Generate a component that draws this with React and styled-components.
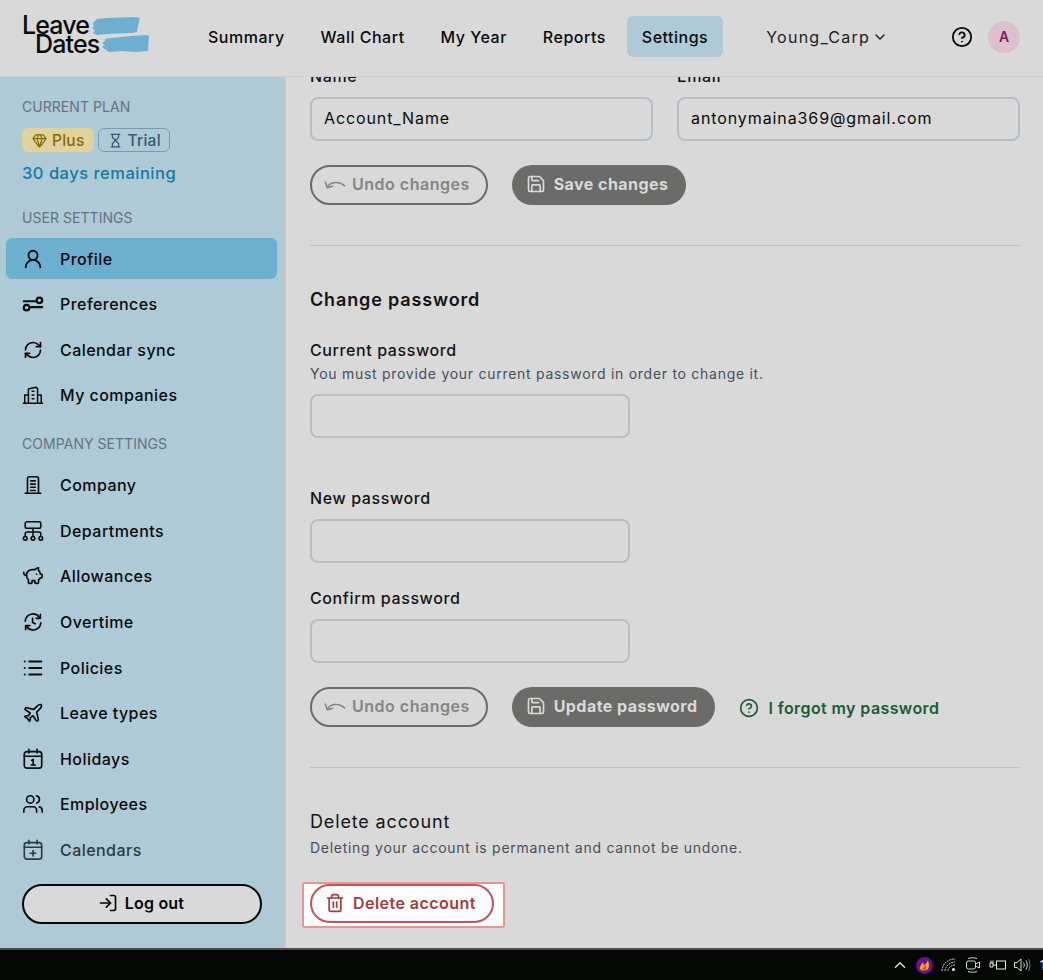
import * as React from 'react'
import styled, { createGlobalStyle } from 'styled-components'
import {
  UserRound,
  RefreshCw,
  PiggyBank,
  List,
  Plane,
  Users,
  LogIn,
  Save,
  CircleHelp,
  Trash2,
  Gem,
  Hourglass,
  ChevronDown,
  ChevronUp,
} from 'lucide-react'

const GlobalStyle = createGlobalStyle`
  html, body {
    margin: 0;
    padding: 0;
    background: #d9d9d9;
  }
  * {
    box-sizing: border-box;
  }
  body {
    font-family: Inter, 'Noto Sans', 'Liberation Sans', sans-serif;
    color: #0a0a0a;
  }
`

const Page = styled.div`
  display: flex;
  flex-direction: column;
  width: 1043px;
  height: 980px;
  overflow: hidden;
`

const Header = styled.header`
  display: flex;
  align-items: center;
  flex: 0 0 77px;
  padding: 0 23px 3px 22px;
  border-bottom: 1px solid #c9ced2;
`

const Logo = styled.div`
  position: relative;
  width: 130px;
  height: 42px;
  margin-right: 56px;
  font-size: 25px;
  font-weight: 500;
  line-height: 19px;
  letter-spacing: -0.85px;
  color: #0b0b0b;

  div + div {
    padding-left: 13px;
  }

  svg {
    position: absolute;
    left: 1px;
    top: 0;
  }

  span {
    position: relative;
  }
`

const Nav = styled.nav`
  display: flex;
  align-items: center;
  gap: 36px;
`

const NavItem = styled.a`
  font-size: 16px;
  font-weight: 500;
  letter-spacing: 0.5px;
  color: #0a0a0a;
`

const NavActive = styled(NavItem)`
  display: flex;
  align-items: center;
  height: 41px;
  margin-left: -15px;
  padding: 0 15px;
  border-radius: 6px;
  background: #aecad6;
`

const Workspace = styled.div`
  display: flex;
  align-items: center;
  gap: 2px;
  margin-left: 43px;
  font-size: 16px;
  letter-spacing: 1.25px;
  color: #1c1c1c;
`

const HeaderEnd = styled.div`
  display: flex;
  align-items: center;
  gap: 15px;
  margin-left: auto;
`

const Avatar = styled.div`
  display: flex;
  align-items: center;
  justify-content: center;
  width: 32px;
  height: 32px;
  border-radius: 50%;
  background: #dcc0d0;
  color: #7a1d5c;
  font-size: 14px;
  font-weight: 600;
`

const Body = styled.div`
  display: flex;
  flex: 1;
  min-height: 0;
`

const Sidebar = styled.aside`
  display: flex;
  flex-direction: column;
  flex: 0 0 286px;
  padding: 20px 7px 0 6px;
  background: #aecad6;
  border-right: 2px solid #c8c8c8;
`

const SectionTitle = styled.div`
  height: 20px;
  margin: ${(props) => props.$margin || '0'};
  padding-left: 16px;
  font-size: 14px;
  line-height: 20px;
  letter-spacing: 0.05px;
  color: #66727f;
`

const Badges = styled.div`
  display: flex;
  gap: 4px;
  margin: 11px 0 0 16px;
`

const Badge = styled.div`
  display: flex;
  align-items: center;
  gap: 5px;
  height: 24px;
  padding: 0 8px 0 9px;
  border-radius: 6px;
  border: 1px solid ${(props) => props.$border};
  background: ${(props) => props.$bg};
  color: ${(props) => props.$color};
  font-size: 15.5px;
  font-weight: 500;
  letter-spacing: 0.25px;
`

const Remaining = styled.div`
  margin: 9px 0 23px 16px;
  font-size: 16.5px;
  line-height: 24px;
  font-weight: 500;
  letter-spacing: 0.5px;
  color: #0f7ba6;
`

const NavList = styled.div`
  display: flex;
  flex-direction: column;
  gap: 4.6px;
  margin: ${(props) => props.$margin || '0'};
`

const SideItem = styled.a`
  display: flex;
  align-items: center;
  gap: 16px;
  height: 41px;
  padding-left: 16px;
  border-radius: 6px;
  background: ${(props) => (props.$active ? '#6dafcf' : 'transparent')};
  color: ${(props) => (props.$faded ? '#2c3a42' : '#0a0a0a')};
  font-size: 16px;
  font-weight: 500;
  letter-spacing: 0.45px;
`

const IconSlot = styled.span`
  display: flex;
  align-items: center;
  justify-content: center;
  flex: 0 0 22px;
  height: 22px;
`

const LogoutButton = styled.button`
  display: flex;
  align-items: center;
  justify-content: center;
  gap: 7px;
  width: 240px;
  height: 40px;
  margin: 13px 0 0 16px;
  padding: 0 2px 2px 0;
  border: 2px solid #050505;
  border-radius: 20px;
  background: #d9d9d9;
  color: #050505;
  font-family: inherit;
  font-size: 16px;
  font-weight: 600;
  letter-spacing: 0.2px;
`

const Main = styled.main`
  flex: 1;
  min-width: 0;
  overflow: hidden;
  padding: 0 23px 0 24px;
`

const Content = styled.div`
  margin-top: -13px;
`

const TwoColumns = styled.div`
  display: grid;
  grid-template-columns: 343px 343px;
  gap: 24px;
`

const Label = styled.label`
  display: block;
  height: 24px;
  margin: ${(props) => props.$margin || '0 0 9px'};
  font-size: 16px;
  line-height: 24px;
  font-weight: 500;
  letter-spacing: 0.6px;
  color: #141414;
`

const Hint = styled.p`
  margin: ${(props) => props.$margin || '0'};
  font-size: 14px;
  line-height: 20px;
  letter-spacing: 0.72px;
  color: #46505c;
`

const Input = styled.div`
  display: flex;
  align-items: center;
  width: ${(props) => props.$width || '100%'};
  height: 44px;
  padding: 0 12px 2px;
  border: 2px solid #b5bdc6;
  border-radius: 8px;
  font-size: 16px;
  letter-spacing: 0.9px;
  color: #0a0a0a;
`

const Actions = styled.div`
  display: flex;
  align-items: center;
  gap: 24px;
  margin-top: 24px;
`

const GhostButton = styled.button`
  display: flex;
  align-items: center;
  gap: 6px;
  height: 40px;
  padding: 0 16px 2px 12px;
  border: 2px solid #6b6b69;
  border-radius: 20px;
  background: transparent;
  color: #858585;
  font-family: inherit;
  font-size: 16px;
  font-weight: 600;
  letter-spacing: 0.5px;
`

const SolidButton = styled.button`
  display: flex;
  align-items: center;
  gap: 8px;
  height: 40px;
  padding: 0 18px 2px 14px;
  border: 0;
  border-radius: 20px;
  background: #6b6b69;
  color: #d9d9d9;
  font-family: inherit;
  font-size: 16px;
  font-weight: 700;
  letter-spacing: 0.45px;
`

const ForgotLink = styled.a`
  display: flex;
  align-items: center;
  gap: 9px;
  margin: 2px 0 0;
  color: #1a5c36;
  font-size: 16px;
  font-weight: 600;
  letter-spacing: 0.4px;
`

const Divider = styled.hr`
  height: 1px;
  margin: ${(props) => props.$margin};
  border: 0;
  background: #c2c2c2;
`

const SectionHeading = styled.h2`
  margin: ${(props) => props.$margin || '0'};
  font-size: 18px;
  line-height: 28px;
  font-weight: ${(props) => props.$weight || 600};
  letter-spacing: 0.85px;
  color: #141414;
`

const DeleteFrame = styled.div`
  display: inline-flex;
  margin: 24px 0 0 -8px;
  padding: 2px 11px 5px 8px;
  outline: 2px solid #ec9393;
  outline-offset: -2px;
  border-radius: 2px;
  background: #fff;
`

const DeleteButton = styled.button`
  display: flex;
  align-items: center;
  gap: 8px;
  height: 39px;
  padding: 0 16px 1px 13px;
  border: 2px solid #c85254;
  border-radius: 20px;
  background: #fff;
  color: #a63a3d;
  font-family: inherit;
  font-size: 16px;
  font-weight: 600;
  letter-spacing: 0.45px;
`

const Taskbar = styled.footer`
  display: flex;
  align-items: center;
  justify-content: flex-end;
  flex: 0 0 32px;
  border-top: 2px solid #4d4d4d;
  background: #030603;
  color: #e4e4e4;
  font-size: 13px;
  overflow: hidden;
`

const TraySlot = styled.span`
  display: flex;
  align-items: center;
  justify-content: center;
  width: 24.5px;
`

const Clock = styled.span`
  margin: 0 -2px 0 5px;
`

const iconProps = {
  width: 22,
  height: 22,
  viewBox: '0 0 24 24',
  fill: 'none',
  stroke: 'currentColor',
  strokeWidth: 2,
  strokeLinecap: 'round',
  strokeLinejoin: 'round',
}

const SlidersIcon = () => (
  <svg {...iconProps} strokeWidth={2.4}>
    <circle cx="19" cy="8" r="3" />
    <circle cx="5" cy="16" r="3" />
    <path d="M2 9h13M9 15.500h13" />
  </svg>
)

const BuildingsIcon = () => (
  <svg {...iconProps} strokeWidth={1.6}>
    <path d="M7 21V5.500L15 3.500 17 5v16" />
    <path d="M7 12H3v9M17 12h4v9M1.500 21h21" />
    <path d="M11 8h2M11 12h2M11 16h2" />
  </svg>
)

const CompanyIcon = () => (
  <svg {...iconProps} strokeWidth={1.8}>
    <path d="M6 21V5a2 2 0 0 1 2-2h8a2 2 0 0 1 2 2v16" />
    <path d="M3.500 21h17M9.500 7.500h5M9.500 11h5M9.500 14.500h5M9.500 18h5" />
  </svg>
)

const TreeIcon = () => (
  <svg {...iconProps} strokeWidth={1.7}>
    <rect x="3.500" y="2" width="17" height="7" rx="2" />
    <path d="M12 9v9M3.500 18v-3a2 2 0 0 1 2-2h13a2 2 0 0 1 2 2v3" />
    <circle cx="3.500" cy="20" r="2" />
    <circle cx="12" cy="20" r="2" />
    <circle cx="20.500" cy="20" r="2" />
  </svg>
)

const OvertimeIcon = () => (
  <svg {...iconProps} strokeWidth={1.8}>
    <path d="M3.500 11a8.500 8.500 0 0 1 15.500-4" />
    <path d="M20 3.500V8h-4.500" />
    <path d="M20.500 13a8.500 8.500 0 0 1-15.500 4" />
    <path d="M4 20.500V16h4.500" />
    <path d="M11.500 8v4.500l3 1.500" />
  </svg>
)

const HolidayIcon = () => (
  <svg {...iconProps} strokeWidth={1.8}>
    <rect x="2.500" y="4" width="19" height="18" rx="3" />
    <path d="M7.500 1.500v4M16.500 1.500v4M2.500 9h19" />
    <path d="M10.500 13.500l1.700-1v6M10 18.500h4.500" />
  </svg>
)

const CalendarAddIcon = () => (
  <svg {...iconProps} strokeWidth={1.8}>
    <rect x="2.500" y="4" width="19" height="18" rx="3" />
    <path d="M7.500 1.500v4M16.500 1.500v4M2.500 9h19" />
    <path d="M12 12.500v6M9 15.500h6" />
  </svg>
)

const UndoIcon = () => (
  <svg {...iconProps} strokeWidth={1.7}>
    <path d="M1.500 10l2 6 6-1.500" />
    <path d="M3.500 15.500C7 10 16 8 22.500 14" />
  </svg>
)

const LogoMark = () => (
  <svg width="130" height="42" viewBox="0 0 130 42" fill="#6dafcf">
    <path d="M70 7l4-4 10-1 26-1 7 1-2 8-1 6-5 1-26 1-9 1-4-2 2-3-3-2 2-2z" />
    <path d="M82 23l6-1 20-2 16-1 2 1-1 15-12 1-14-1-13 1-3-2-4-3 3-2-3-2 3-2z" />
  </svg>
)

const WifiIcon = () => (
  <svg width="16" height="16" viewBox="0 0 16 16" fill="none" stroke="#c9c9c9" strokeWidth="1">
    <path d="M1 14C1 8 6 2 14 2M4 14c0-4 4-9 10-9M7 14c0-3 3-6 7-6" strokeDasharray="2 0.7" />
    <circle cx="12.500" cy="12.500" r="1.500" fill="#fff" stroke="none" />
  </svg>
)

const CameraIcon = () => (
  <svg width="18" height="18" viewBox="0 0 18 18" fill="none" stroke="#d8d8d8" strokeWidth="1">
    <rect x="2.500" y="5" width="9" height="8" rx="2" />
    <path d="M11.500 8l4-2v6l-4-2M4 2.500c3-1 6-1 9 0M4 15.500c3 1 6 1 9 0" />
  </svg>
)

const PlugIcon = () => (
  <svg width="18" height="16" viewBox="0 0 18 16" fill="none" stroke="#ededed" strokeWidth="1">
    <rect x="7.500" y="4" width="9" height="8" />
    <path d="M1 6h3v4H1zM4 8h3.500M2 6V3.500M4 6V3.500" />
  </svg>
)

const SpeakerIcon = () => (
  <svg width="18" height="16" viewBox="0 0 18 16" fill="none" stroke="#dcdcdc" strokeWidth="1">
    <path d="M1.500 5.500h2.500L8 2v12l-4-3.500H1.500z" />
    <path d="M10.500 5.500c1 1.500 1 3.500 0 5M13 3.500c1.700 2.800 1.700 6.200 0 9" />
    <path d="M15.500 2c2 3.600 2 8.400 0 12" stroke="#777" />
  </svg>
)

const FlameBadge = () => (
  <svg width="17" height="17" viewBox="0 0 16 16">
    <circle cx="8" cy="8" r="8" fill="#6a128a" />
    <path d="M3.500 11c0-3 2-3.500 2.500-6 1 1 1.500 2 1.500 3 1-1.500 3-2 3.500-5 1 2 2 5 .5 8-1 2-7 2.500-8 0z" fill="#f5a020" />
    <path d="M6 11.500c0-1.500 2-2 3-4 .5 1.500 1 3 0 4.500z" fill="#e8402a" />
  </svg>
)

const userLinks = [
  { label: 'Profile', icon: <UserRound size={22} />, active: true },
  { label: 'Preferences', icon: <SlidersIcon /> },
  { label: 'Calendar sync', icon: <RefreshCw size={20} /> },
  { label: 'My companies', icon: <BuildingsIcon /> },
]

const companyLinks = [
  { label: 'Company', icon: <CompanyIcon /> },
  { label: 'Departments', icon: <TreeIcon /> },
  { label: 'Allowances', icon: <PiggyBank size={22} strokeWidth={1.8} /> },
  { label: 'Overtime', icon: <OvertimeIcon /> },
  { label: 'Policies', icon: <List size={22} strokeWidth={2.2} /> },
  { label: 'Leave types', icon: <Plane size={22} strokeWidth={1.8} /> },
  { label: 'Holidays', icon: <HolidayIcon /> },
  { label: 'Employees', icon: <Users size={22} strokeWidth={1.8} /> },
  { label: 'Calendars', icon: <CalendarAddIcon />, faded: true },
]

const renderLinks = (links) =>
  links.map((link) => (
    <SideItem key={link.label} $active={link.active} $faded={link.faded}>
      <IconSlot>{link.icon}</IconSlot>
      {link.label}
    </SideItem>
  ))

const App = () => {
  return (
    <Page>
      <GlobalStyle />
      <Header>
        <Logo>
          <LogoMark />
          <div><span>Leave</span></div>
          <div><span>Dates</span></div>
        </Logo>
        <Nav>
          <NavItem>Summary</NavItem>
          <NavItem>Wall Chart</NavItem>
          <NavItem>My Year</NavItem>
          <NavItem>Reports</NavItem>
          <NavActive>Settings</NavActive>
        </Nav>
        <Workspace>
          Young_Carp
          <ChevronDown size={16} />
        </Workspace>
        <HeaderEnd>
          <CircleHelp size={22} />
          <Avatar>A</Avatar>
        </HeaderEnd>
      </Header>
      <Body>
        <Sidebar>
          <SectionTitle>CURRENT PLAN</SectionTitle>
          <Badges>
            <Badge $bg="#dfd49c" $border="#dfd49c" $color="#8a6a08">
              <Gem size={15} />
              Plus
            </Badge>
            <Badge $bg="transparent" $border="#6f9cbd" $color="#37587a">
              <Hourglass size={15} />
              Trial
            </Badge>
          </Badges>
          <Remaining>30 days remaining</Remaining>
          <SectionTitle>USER SETTINGS</SectionTitle>
          <NavList $margin="10px 0 0">{renderLinks(userLinks)}</NavList>
          <SectionTitle $margin="18px 0 0">COMPANY SETTINGS</SectionTitle>
          <NavList $margin="11px 0 0">{renderLinks(companyLinks)}</NavList>
          <LogoutButton>
            <LogIn size={20} />
            Log out
          </LogoutButton>
        </Sidebar>
        <Main>
          <Content>
            <TwoColumns>
              <div>
                <Label>Name</Label>
                <Input>Account_Name</Input>
              </div>
              <div>
                <Label>Email</Label>
                <Input>antonymaina369@gmail.com</Input>
              </div>
            </TwoColumns>
            <Actions>
              <GhostButton>
                <UndoIcon />
                Undo changes
              </GhostButton>
              <SolidButton>
                <Save size={20} />
                Save changes
              </SolidButton>
            </Actions>
            <Divider $margin="40px 0 40px" />
            <SectionHeading>Change password</SectionHeading>
            <Label $margin="24px 0 0">Current password</Label>
            <Hint $margin="2px 0 10px">You must provide your current password in order to change it.</Hint>
            <Input $width="320px" />
            <Label $margin="48px 0 9px">New password</Label>
            <Input $width="320px" />
            <Label $margin="23px 0 9px">Confirm password</Label>
            <Input $width="320px" />
            <Actions>
              <GhostButton>
                <UndoIcon />
                Undo changes
              </GhostButton>
              <SolidButton>
                <Save size={20} />
                Update password
              </SolidButton>
              <ForgotLink>
                <CircleHelp size={20} />
                I forgot my password
              </ForgotLink>
            </Actions>
            <Divider $margin="40px 0 40px" />
            <SectionHeading $weight={400}>Delete account</SectionHeading>
            <Hint $margin="2px 0 0">Deleting your account is permanent and cannot be undone.</Hint>
            <DeleteFrame>
              <DeleteButton>
                <Trash2 size={20} />
                Delete account
              </DeleteButton>
            </DeleteFrame>
          </Content>
        </Main>
      </Body>
      <Taskbar>
        <TraySlot><ChevronUp size={18} color="#dddddd" /></TraySlot>
        <TraySlot><FlameBadge /></TraySlot>
        <TraySlot><WifiIcon /></TraySlot>
        <TraySlot><CameraIcon /></TraySlot>
        <TraySlot><PlugIcon /></TraySlot>
        <TraySlot><SpeakerIcon /></TraySlot>
        <Clock>1</Clock>
      </Taskbar>
    </Page>
  )
}

export default App
